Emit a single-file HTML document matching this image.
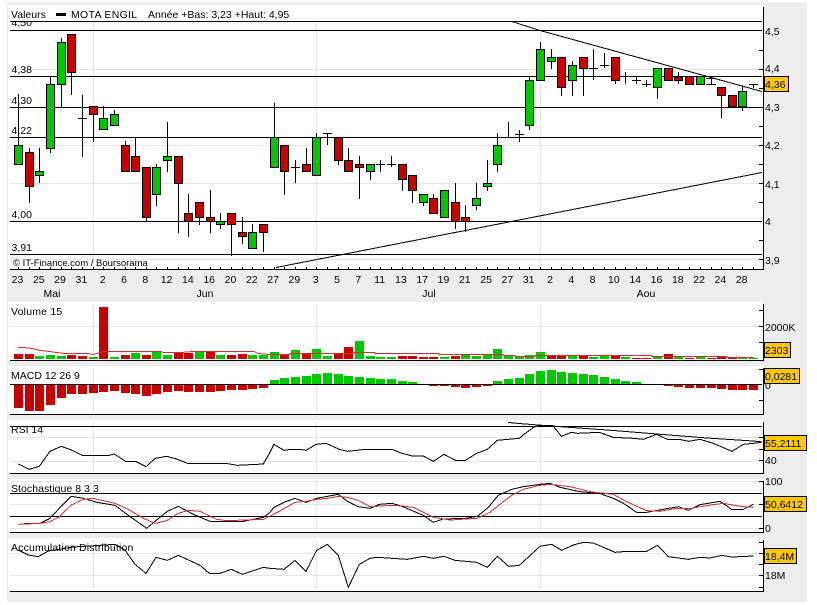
<!DOCTYPE html>
<html><head><meta charset="utf-8"><title>MOTA ENGIL</title>
<style>
html,body{margin:0;padding:0;background:#fff}
svg{display:block}
text{font-family:"Liberation Sans",sans-serif;font-size:10.5px;fill:#000}
.m{text-anchor:middle}
.p{fill:none;stroke:#000;vector-effect:non-scaling-stroke}
.r{stroke:#c83232}
</style></head><body>
<svg width="817" height="605" viewBox="0 0 817 605" xmlns="http://www.w3.org/2000/svg" shape-rendering="crispEdges">
<rect x="7" y="2" width="800" height="600" fill="#ededed"/>
<g fill="#fff">
<rect x="8" y="5" width="755" height="264"/>
<rect x="8" y="302" width="755" height="58"/>
<rect x="8" y="366" width="755" height="48"/>
<rect x="8" y="420" width="755" height="53"/>
<rect x="8" y="479" width="755" height="53"/>
<rect x="8" y="538" width="755" height="53"/>
</g>
<!-- gray grid -->
<path fill="none" stroke="#e6e6e6" d="M10 69.5H762M10 145.5H762M10 183.5H762M10 259.5H762M93.5 21V268M316.5 21V268M540.5 21V268
M10 326.5H762M93.5 304V360M316.5 304V360M540.5 304V360
M93.5 368V413M316.5 368V413M540.5 368V413
M10 437.5H762M10 461.5H762M93.5 422V472M316.5 422V472M540.5 422V472
M10 481.5H762M10 504.5H762M10 528.5H762M93.5 481V531M316.5 481V531M540.5 481V531
M10 553.5H762M10 575.5H762M93.5 540V590M316.5 540V590M540.5 540V590"/>
<!-- clipped texts -->
<text x="11.5" y="26">4,50</text>
<text x="11" y="433">RSI 14</text>
<rect x="8" y="5" width="60" height="16" fill="#fff"/>
<rect x="8" y="420" width="60" height="6" fill="#fff"/>
<!-- titles -->
<text x="11" y="18">Valeurs</text>
<rect x="56" y="13" width="10" height="3" fill="#000"/>
<text x="71" y="18" style="letter-spacing:.3px">MOTA ENGIL</text>
<text x="148" y="18">Année +Bas: 3,23 +Haut: 4,95</text>
<text x="11.5" y="73">4,38</text>
<text x="11.5" y="104">4,30</text>
<text x="11.5" y="134">4,22</text>
<text x="11.5" y="218">4,00</text>
<text x="11.5" y="251">3,91</text>
<text x="13" y="266" style="font-size:9.5px">© IT-Finance.com / Boursorama</text>
<text x="11" y="315" style="letter-spacing:.2px">Volume 15</text>
<text x="11" y="379">MACD 12 26 9</text>
<text x="11" y="492" style="letter-spacing:.05px">Stochastique 8 3 3</text>
<text x="11" y="551" style="letter-spacing:.16px">Accumulation Distribution</text>
<!-- black levels -->
<path fill="none" stroke="#000" d="M10 21.5H762M10 30.5H762M10 76.5H762M10 107.5H762M10 137.5H762M10 221.5H762M10 254.5H762
M10 269.5H764M10 360.5H764M10 384.5H762M10 414.5H764
M10 426.5H762M10 473.5H764M10 493.5H762M10 516.5H762M10 532.5H764M10 591.5H764"/>
<!-- trend lines -->
<path fill="none" stroke="#000" d="M512 21.5L540 30.5L762 91.5M276 267.5L762 172.5M508 422.5L525 424L565 427L607 430L657 434L707 438L753 441L762 442"/>
<!-- wicks -->
<path fill="none" stroke="#000" d="M18.5 94V145M29.5 148V152M29.5 186V203M39.5 148V171M39.5 175V183M50.5 77V84M50.5 148V153M61.5 38V42M61.5 84V107M71.5 72V95M82.5 95V157M78 118.5H87M93.5 114V142M103.5 106V118M114.5 110V114M125.5 141V145M135.5 137V156M146.5 217V221M156.5 164V167M156.5 194V206M167.5 122V156M167.5 160V172M178.5 183V233M188.5 194V213M188.5 221V237M199.5 217V225M210.5 190V217M210.5 221V233M220.5 213V221M220.5 224V229M231.5 224V256M242.5 217V232M242.5 236V244M252.5 224V232M263.5 232V252M274.5 103V137M284.5 171V195M295.5 160V183M291 167.5H300M306.5 148V164M316.5 133V137M327.5 133V145M323 133.5H332M338.5 160V165M348.5 148V160M359.5 156V164M359.5 167V199M370.5 171V180M380.5 160V172M376 164.5H385M391.5 156V167M387 164.5H396M402.5 179V191M412.5 190V203M423.5 202V206M433.5 194V198M455.5 183V202M455.5 221V229M465.5 205V217M465.5 221V232M476.5 183V198M476.5 205V210M487.5 160V183M487.5 186V191M497.5 133V145M497.5 164V172M508.5 122V137M519.5 130V142M515 134.5H524M529.5 76V80M529.5 125V130M540.5 42V49M551.5 49V57M551.5 61V69M561.5 87V96M572.5 61V65M572.5 80V96M583.5 68V96M593.5 49V80M589 68.5H598M604.5 53V68M600 65.5H609M615.5 80V84M625.5 72V84M636.5 76V84M632 80.5H641M646.5 80V87M642 84.5H651M657.5 87V99M678.5 72V77M678.5 80V84M711.5 78V84M706 78.5H716M706 84.5H716M721.5 95V118M742.5 86V91M742.5 106V111M753.5 84V88M749 84.5H758"/>
<!-- green bodies -->
<path fill="#00c800" stroke="#000" d="M14.5 145.5h8v19h-8zM35.5 171.5h8v4h-8zM46.5 84.5h8v64h-8zM57.5 42.5h8v42h-8zM99.5 118.5h8v11h-8zM110.5 114.5h8v11h-8zM152.5 167.5h8v27h-8zM163.5 156.5h8v4h-8zM216.5 221.5h8v3h-8zM248.5 232.5h8v16h-8zM270.5 137.5h8v30h-8zM312.5 137.5h8v38h-8zM366.5 164.5h8v7h-8zM419.5 194.5h8v8h-8zM440.5 190.5h8v27h-8zM472.5 198.5h8v7h-8zM483.5 183.5h8v3h-8zM493.5 145.5h8v19h-8zM525.5 80.5h8v45h-8zM536.5 49.5h8v31h-8zM547.5 57.5h8v4h-8zM568.5 65.5h8v15h-8zM653.5 68.5h8v19h-8zM696.5 76.5h8v8h-8zM738.5 91.5h8v15h-8z"/>
<!-- red bodies -->
<path fill="#c80000" stroke="#000" d="M25.5 152.5h8v34h-8zM67.5 34.5h8v38h-8zM89.5 106.5h8v8h-8zM121.5 145.5h8v26h-8zM131.5 156.5h8v15h-8zM142.5 167.5h8v50h-8zM174.5 156.5h8v27h-8zM184.5 213.5h8v8h-8zM195.5 202.5h8v15h-8zM206.5 217.5h8v4h-8zM227.5 213.5h8v11h-8zM238.5 232.5h8v4h-8zM259.5 224.5h8v8h-8zM280.5 145.5h8v26h-8zM302.5 164.5h8v7h-8zM334.5 137.5h8v23h-8zM344.5 160.5h8v11h-8zM355.5 164.5h8v3h-8zM398.5 164.5h8v15h-8zM408.5 175.5h8v15h-8zM429.5 198.5h8v15h-8zM451.5 202.5h8v19h-8zM461.5 217.5h8v4h-8zM557.5 57.5h8v30h-8zM579.5 57.5h8v11h-8zM611.5 57.5h8v23h-8zM664.5 68.5h8v12h-8zM674.5 77.5h8v3h-8zM685.5 76.5h8v8h-8zM717.5 87.5h8v8h-8zM728.5 95.5h8v11h-8z"/>
<!-- bottom ticks -->
<path fill="none" stroke="#000" d="M18.5 267v2M29.5 267v2M39.5 267v2M50.5 267v2M61.5 267v2M71.5 267v2M82.5 267v2M93.5 267v2M103.5 267v2M114.5 267v2M125.5 267v2M135.5 267v2M146.5 267v2M156.5 267v2M167.5 267v2M178.5 267v2M188.5 267v2M199.5 267v2M210.5 267v2M220.5 267v2M231.5 267v2M242.5 267v2M252.5 267v2M263.5 267v2M274.5 267v2M284.5 267v2M295.5 267v2M306.5 267v2M316.5 267v2M327.5 267v2M338.5 267v2M348.5 267v2M359.5 267v2M370.5 267v2M380.5 267v2M391.5 267v2M402.5 267v2M412.5 267v2M423.5 267v2M433.5 267v2M444.5 267v2M455.5 267v2M465.5 267v2M476.5 267v2M487.5 267v2M497.5 267v2M508.5 267v2M519.5 267v2M529.5 267v2M540.5 267v2M551.5 267v2M561.5 267v2M572.5 267v2M583.5 267v2M593.5 267v2M604.5 267v2M615.5 267v2M625.5 267v2M636.5 267v2M646.5 267v2M657.5 267v2M668.5 267v2M678.5 267v2M689.5 267v2M700.5 267v2M711.5 267v2M721.5 267v2M732.5 267v2M742.5 267v2M753.5 267v2"/>
<!-- date labels -->
<g class="m">
<text class="m" x="17.5" y="283">23</text><text class="m" x="38.8" y="283">25</text><text class="m" x="60" y="283">29</text><text class="m" x="81.4" y="283">31</text><text class="m" x="102.7" y="283">2</text><text class="m" x="124" y="283">6</text><text class="m" x="145.3" y="283">8</text><text class="m" x="166.6" y="283">12</text><text class="m" x="187.9" y="283">14</text><text class="m" x="209.2" y="283">16</text><text class="m" x="230.5" y="283">20</text><text class="m" x="251.8" y="283">22</text><text class="m" x="273.1" y="283">27</text><text class="m" x="294.4" y="283">29</text><text class="m" x="315.7" y="283">3</text><text class="m" x="337" y="283">5</text><text class="m" x="358.3" y="283">7</text><text class="m" x="379.6" y="283">11</text><text class="m" x="400.9" y="283">13</text><text class="m" x="422.2" y="283">17</text><text class="m" x="443.5" y="283">19</text><text class="m" x="464.8" y="283">21</text><text class="m" x="486.1" y="283">25</text><text class="m" x="507.4" y="283">27</text><text class="m" x="528.7" y="283">31</text><text class="m" x="550" y="283">2</text><text class="m" x="571.3" y="283">4</text><text class="m" x="592.6" y="283">8</text><text class="m" x="613.9" y="283">10</text><text class="m" x="635.2" y="283">14</text><text class="m" x="656.5" y="283">16</text><text class="m" x="677.8" y="283">18</text><text class="m" x="699.1" y="283">22</text><text class="m" x="720.4" y="283">24</text><text class="m" x="741.7" y="283">28</text>
<text class="m" x="52" y="297">Mai</text><text class="m" x="205" y="297">Jun</text><text class="m" x="429" y="297">Jul</text><text class="m" x="646" y="297">Aou</text>
</g>
<!-- volume bars -->
<path fill="#c80000" d="M14 354h9v5h-9zM25 354h9v5h-9zM67 355h9v4h-9zM78 356h9v3h-9zM99 307h9v52h-9zM121 355h9v4h-9zM142 355h9v4h-9zM174 353h9v6h-9zM184 353h9v6h-9zM206 352h9v7h-9zM227 355h9v4h-9zM238 354h9v5h-9zM280 355h9v4h-9zM302 353h9v6h-9zM334 353h9v6h-9zM344 347h9v12h-9zM398 356h9v3h-9zM408 356h9v3h-9zM419 357h9v2h-9zM429 357h9v2h-9zM451 356h9v3h-9zM547 355h9v4h-9zM557 355h9v4h-9zM579 355h9v4h-9zM611 355h9v4h-9zM632 358h9v1h-9zM642 358h9v1h-9zM664 354h9v5h-9zM685 358h9v1h-9zM707 358h9v1h-9zM717 356h9v3h-9zM728 358h9v1h-9z"/>
<path fill="#00c800" d="M35 356h9v3h-9zM46 355h9v4h-9zM57 356h9v3h-9zM89 357h9v2h-9zM110 357h9v2h-9zM131 353h9v6h-9zM152 352h9v7h-9zM163 355h9v4h-9zM195 352h9v7h-9zM216 355h9v4h-9zM248 355h9v4h-9zM259 355h9v4h-9zM270 352h9v7h-9zM291 350h9v9h-9zM312 349h9v10h-9zM323 356h9v3h-9zM355 341h9v18h-9zM366 356h9v3h-9zM376 357h9v2h-9zM387 357h9v2h-9zM440 357h9v2h-9zM461 355h9v4h-9zM472 356h9v3h-9zM483 355h9v4h-9zM493 349h9v10h-9zM504 355h9v4h-9zM515 357h9v2h-9zM525 355h9v4h-9zM536 352h9v7h-9zM568 355h9v4h-9zM589 357h9v2h-9zM600 355h9v4h-9zM621 357h9v2h-9zM653 357h9v2h-9zM674 357h9v2h-9zM696 357h9v2h-9zM738 358h9v1h-9zM749 358h9v1h-9z"/>
<path fill="none" stroke="#c83232" d="M18 347.5L24 347.5L32 348.5L40 350.5L50 351.5L56 352.5L66 353.5L87 353.5L93 354.5L97 353.5L103 351.5L161 351.5L163 352.5L181 352.5L193 351.5L254 351.5L258 353.5L270 354.5L290 354.5L290 353.5L354 353.5L354 352.5L375 352.5L375 353.5L439 353.5L439 354.5L503 354.5L503 355.5L515 355.5L515 356.5L535 356.5L535 355.5L652 355.5L652 356.5L727 356.5L727 357.5L754 357.5"/>
<!-- MACD bars -->
<path fill="#c80000" d="M14 385h9v23h-9zM25 385h9v26h-9zM35 385h9v26h-9zM46 385h9v20h-9zM57 385h9v13h-9zM67 385h9v9h-9zM78 385h9v9h-9zM89 385h9v8h-9zM99 385h9v7h-9zM110 385h9v6h-9zM121 385h9v8h-9zM131 385h9v9h-9zM142 385h9v11h-9zM152 385h9v9h-9zM163 385h9v7h-9zM174 385h9v6h-9zM184 385h9v7h-9zM195 385h9v7h-9zM206 385h9v7h-9zM216 385h9v6h-9zM227 385h9v5h-9zM238 385h9v5h-9zM248 385h9v4h-9zM259 385h9v3h-9zM429 385h9v1h-9zM440 385h9v1h-9zM451 385h9v2h-9zM461 385h9v3h-9zM472 385h9v2h-9zM483 385h9v1h-9zM664 385h9v1h-9zM674 385h9v2h-9zM685 385h9v3h-9zM696 385h9v3h-9zM707 385h9v3h-9zM717 385h9v4h-9zM728 385h9v5h-9zM738 385h9v5h-9zM749 385h9v5h-9z"/>
<path fill="#00c800" d="M270 380h9v4h-9zM280 378h9v6h-9zM291 377h9v7h-9zM302 376h9v8h-9zM312 374h9v10h-9zM323 373h9v11h-9zM334 374h9v10h-9zM344 376h9v8h-9zM355 377h9v7h-9zM366 378h9v6h-9zM376 379h9v5h-9zM387 379h9v5h-9zM398 381h9v3h-9zM408 382h9v2h-9zM493 381h9v3h-9zM504 379h9v5h-9zM515 378h9v6h-9zM525 374h9v10h-9zM536 371h9v13h-9zM547 370h9v14h-9zM557 372h9v12h-9zM568 373h9v11h-9zM579 374h9v10h-9zM589 375h9v9h-9zM600 377h9v7h-9zM611 379h9v5h-9zM621 381h9v3h-9zM632 382h9v2h-9z"/>
<!-- RSI -->
<g transform="translate(0,420) scale(.33333)"><polyline class="p" points="55,132 88,148 118,139 150,94 184,79 214,90 247,106 328,106 343,102 376,124 406,124 438,140 466,115 500,109 530,117 562,130 676,130 712,136 790,132 810,97"/></g>
<g transform="translate(270,420) scale(.33333)"><polyline class="p" points="0,97 12,73 42,91 62,88 90,88 108,91 138,73 168,70 208,88 232,94 252,92 285,88 366,88 396,100 426,108 460,108 490,124 522,103 556,121 586,121 620,100 652,88 682,61 748,55 762,43 790,22 810,16"/></g>
<g transform="translate(540,420) scale(.33333)"><polyline class="p" points="0,16 38,16 64,49 94,37 112,40 178,37 220,52 280,55 310,58 350,43 382,58 418,58 446,64 480,58 520,70 576,94 610,73 640,70 665,67"/></g>
<!-- Stochastic -->
<g transform="translate(0,420) scale(.33333)"><polyline class="p" points="72,310 120,310 150,295 175,268 214,229 250,235 290,247 345,256 385,286 440,325 470,300 502,274 535,259 580,283 630,304 730,304 790,292 810,277"/></g>
<g transform="translate(270,420) scale(.33333)"><polyline class="p" points="0,277 12,262 42,247 75,235 108,247 140,235 172,229 205,223 232,244 265,260 300,265 328,253 366,250 396,259 460,286 490,307 520,297 586,295 622,289 655,262 685,226 725,208 760,200 810,193"/></g>
<g transform="translate(540,420) scale(.33333)"><polyline class="p" points="0,193 30,190 60,202 120,215 178,220 220,235 250,250 290,277 320,277 380,266 415,260 445,271 480,254 540,244 575,268 610,268 640,253"/></g>
<g transform="translate(0,420) scale(.33333)"><polyline class="p r" points="55,313 120,310 150,305 178,290 214,255 250,238 280,235 345,250 385,268 430,295 466,310 500,302 535,280 565,271 600,274 650,298 680,302 790,298 810,288"/></g>
<g transform="translate(270,420) scale(.33333)"><polyline class="p r" points="0,288 35,270 75,247 108,244 140,238 172,235 205,229 232,232 265,241 300,260 366,256 396,258 430,262 460,277 490,292 540,300 622,295 660,277 690,253 725,226 760,208 810,196"/></g>
<g transform="translate(540,420) scale(.33333)"><polyline class="p r" points="0,196 30,193 90,200 150,215 220,223 260,245 320,272 360,274 410,265 450,266 480,260 520,254 550,250 600,259 640,262"/></g>
<!-- Accumulation -->
<g transform="translate(0,420) scale(.33333)"><polyline class="p" points="55,390 85,405 115,410 145,393 175,388 220,381 345,373 375,390 405,433 438,460 468,412 502,421 535,406 600,436 628,460 660,460 694,448 727,463 790,442 810,445"/></g>
<g transform="translate(270,420) scale(.33333)"><polyline class="p" points="0,445 42,448 75,421 108,454 140,391 172,373 205,406 235,502 268,433 300,415 322,412 412,418 460,409 490,415 522,409 555,421 620,427 652,442 682,409 716,439 748,436 810,379"/></g>
<g transform="translate(540,420) scale(.33333)"><polyline class="p" points="0,379 35,373 65,391 100,375 130,367 160,369 225,397 260,394 320,394 352,376 385,410 445,418 480,412 510,414 545,406 575,411 640,408"/></g>
<!-- axes -->
<path fill="none" stroke="#000" d="M763.5 7V270M763.5 304V361M763.5 368V415M763.5 422V474M763.5 481V533M763.5 540V592
M759 50.5h4M759 69.5h4M759 88.5h4M759 107.5h4M759 126.5h4M759 145.5h4M759 164.5h4M759 183.5h4M759 202.5h4M759 240.5h4M759 259.5h4
M759 310.5h4M759 326.5h4M759 342.5h4M759 369.5h4M759 400.5h4
M759 437.5h4M759 449.5h4M759 460.5h4M759 481.5h4M759 504.5h4M759 528.5h4
M759 542.5h4M759 553.5h4M759 564.5h4M759 575.5h4M759 587.5h4"/>
<text x="765" y="35">4,5</text><text x="765" y="72">4,4</text><text x="765" y="111">4,3</text><text x="765" y="149">4,2</text><text x="765" y="188">4,1</text><text x="765" y="225">4</text><text x="765" y="264">3,9</text>
<text x="765" y="331">2000K</text><text x="765" y="389">0</text><text x="765" y="464">40</text><text x="765" y="485">100</text><text x="765" y="532">0</text><text x="765" y="579">18M</text>
<!-- value boxes -->
<g fill="#ffc800" stroke="#000">
<rect x="764.5" y="76.5" width="24" height="15"/>
<rect x="764.5" y="342.5" width="26" height="15"/>
<rect x="764.5" y="368.5" width="35" height="15"/>
<rect x="764.5" y="435.5" width="42" height="15"/>
<rect x="764.5" y="496.5" width="42" height="15"/>
<rect x="764.5" y="548.5" width="32" height="15"/>
</g>
<text x="765" y="88">4,36</text>
<text x="765" y="354">2303</text>
<text x="765" y="380">0,0281</text>
<text x="765" y="447">55,2111</text>
<text x="765" y="508">50,6412</text>
<text x="765" y="560">18,4M</text>
</svg>
</body></html>
